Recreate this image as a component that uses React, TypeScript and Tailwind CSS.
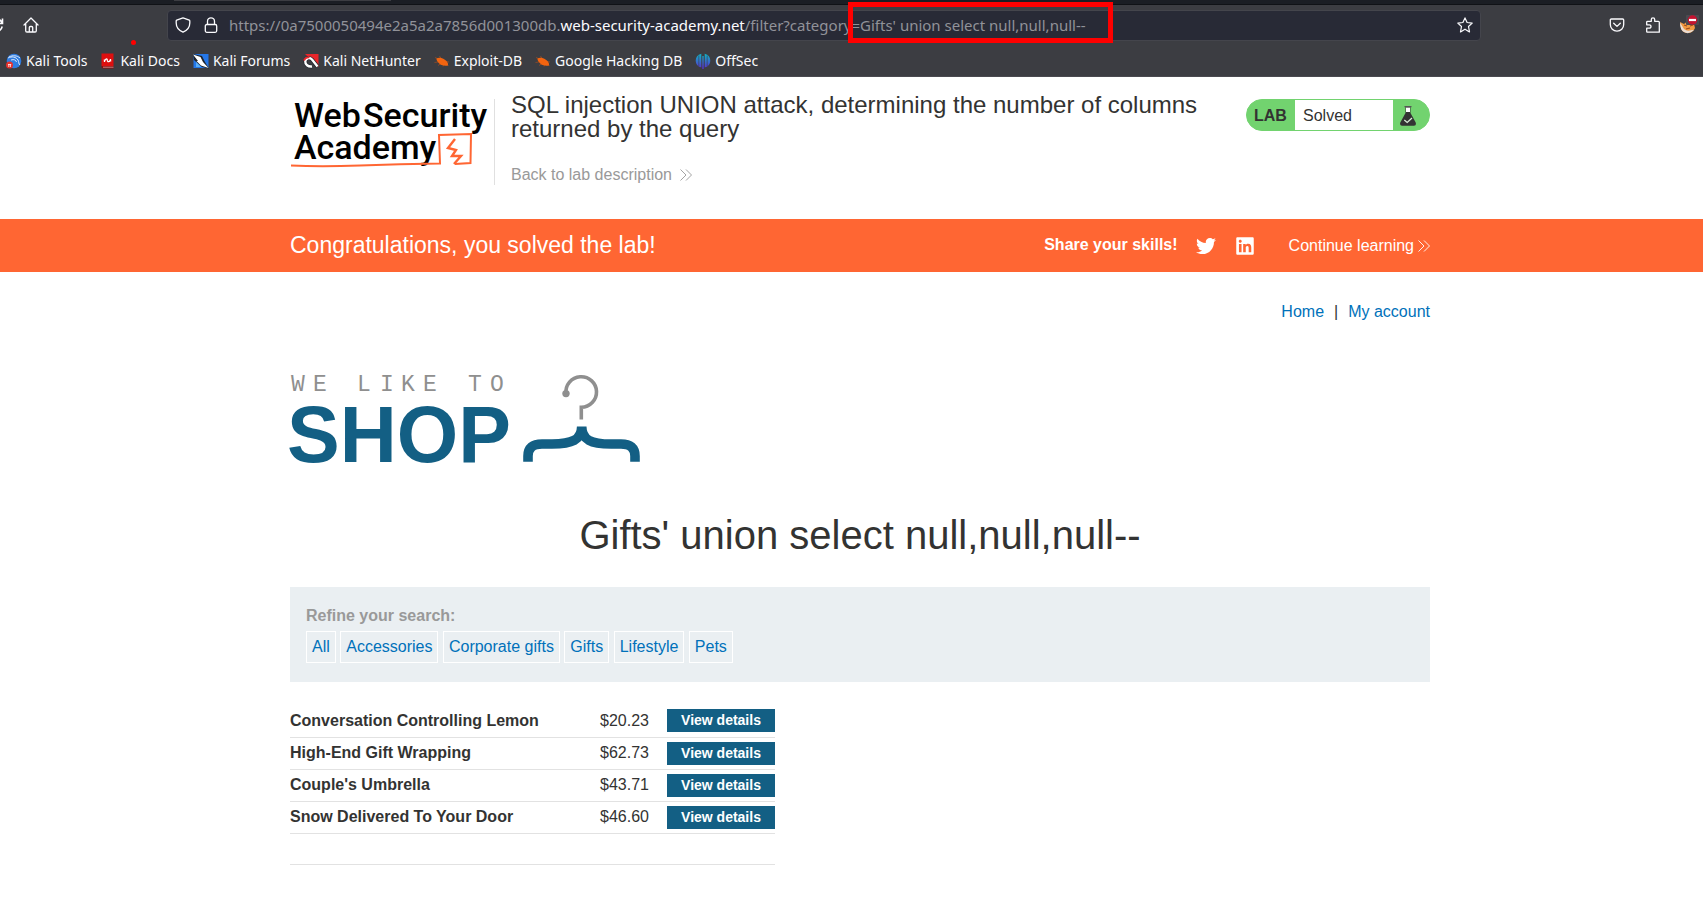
import type { ReactNode } from 'react';
import { FaTwitter, FaLinkedin } from 'react-icons/fa';

function ExploitIcon() {
  return (
    <svg viewBox="0 0 16 16" className="h-4 w-4" aria-hidden="true">
      <path d="M1 4.500L4.500 6M5.500 3L7 5.500M.5 9.500L4 9M4 12.500L7 10.500M9 13.500L10 11M15 9L12 8.500M14.500 12.500L12 11" stroke="#8f4a26" strokeWidth=".9" fill="none" />
      <path d="M2.500 5.500C4.500 4 8 4.500 10.500 6.500C13 8 14.500 10 14 12.500C11.500 13 8 13 5.500 10.800C3.800 9.300 2.300 7.500 2.500 5.500Z" fill="#f26410" />
    </svg>
  );
}

const bookmarks: { label: string; icon: ReactNode }[] = [
  {
    label: 'Kali Tools',
    icon: (
      <svg viewBox="0 0 16 16" className="h-4 w-4" aria-hidden="true">
        <circle cx="8" cy="8" r="7.300" fill="#2f7de1" />
        <path d="M2 5C6 3 10 4 12 7C13 9 12.500 11 14 12M3 4C7 2 11 2.500 14 5M5 7C8 6 10 7 10.500 9" stroke="#dbe8fb" strokeWidth="1" fill="none" />
        <circle cx="3.500" cy="12" r="3.500" fill="#e5322d" />
        <path d="M2 11.500H5.200M2.800 11.500V14M4.400 11.500V14" stroke="#fff" strokeWidth=".8" />
      </svg>
    ),
  },
  {
    label: 'Kali Docs',
    icon: (
      <svg viewBox="0 0 16 16" className="h-4 w-4" aria-hidden="true">
        <path d="M1.500.500H13.500V13H1.500Z" fill="#dd0f0f" />
        <path d="M1.500 13H13.500V15.500H3Q1.500 15.500 1.500 13Z" fill="#8e0d0d" />
        <path d="M3 14.200H13.500" stroke="#d9b9b9" strokeWidth=".7" />
        <path d="M4.500 9L4.300 6.500M4.500 8.500C6 5 7.200 5.500 7.300 7.200C7.400 9.200 9.500 9.500 10.500 6.300M10.700 8.500L10.500 6" fill="none" stroke="#fff" strokeWidth="1.200" />
      </svg>
    ),
  },
  {
    label: 'Kali Forums',
    icon: (
      <svg viewBox="0 0 16 16" className="h-4 w-4" aria-hidden="true">
        <path d="M.5 1H15.500V15H.500Z" fill="#2577e8" />
        <path d="M0 1L9 3L12 9L16 15.500L9 14L1 7Z" fill="#20242b" />
        <path d="M0 1.500L7.500 4L10 9L15.500 15L8 12.500L5 9.500L3.500 8L5 8Z" fill="#fff" />
        <path d="M3 9L8 14H3Z" fill="#58aef5" />
      </svg>
    ),
  },
  {
    label: 'Kali NetHunter',
    icon: (
      <svg viewBox="0 0 16 16" className="h-4 w-4" aria-hidden="true">
        <path d="M2 1H15.500V14Z" fill="#e8262b" />
        <path d="M9 13.500C5 14 2 11.500 2.300 8.200C2.600 5 6.500 4 9 6.500L14.500 13.500" fill="none" stroke="#20242b" strokeWidth="3.800" />
        <path d="M9 13.500C5 14 2 11.500 2.300 8.200C2.600 5 6.500 4 9 6.500L14.500 13.500" fill="none" stroke="#fff" strokeWidth="2.400" />
        <path d="M1 7.500Q2.500 3.500 6.500 4.500" fill="none" stroke="#e8262b" strokeWidth="1.800" />
      </svg>
    ),
  },
  { label: 'Exploit-DB', icon: <ExploitIcon /> },
  { label: 'Google Hacking DB', icon: <ExploitIcon /> },
  {
    label: 'OffSec',
    icon: (
      <svg viewBox="0 0 16 16" className="h-4 w-4" aria-hidden="true">
        <defs>
          <linearGradient id="offsec" x1="0" y1="0" x2="0" y2="1">
            <stop offset="0" stopColor="#0fb5c4" />
            <stop offset="1" stopColor="#5a2bd0" />
          </linearGradient>
        </defs>
        <path d="M6.300.8V14.500Q.7 13 .7 7.700Q.7 2.500 6.300.8ZM9.700.8V14.500Q15.300 13 15.300 7.700Q15.300 2.500 9.700.8ZM7.300 3H8.700V16H7.300Z" fill="url(#offsec)" />
        <path d="M3.800 2.500V13M12.200 2.500V13" stroke="#3a3b45" strokeWidth=".6" />
      </svg>
    ),
  },
];

const iconButton = 'flex h-5 w-5 items-center justify-center text-[#fbfbfe]';

function BrowserChrome() {
  return (
    <header className="relative overflow-hidden border-b border-[#4a4a50] bg-[#3c3d42] font-['Noto_Sans',sans-serif] text-[#fbfbfe]">
      <div className="h-[5px] border-b border-[#101216] bg-[#1b1e24]">
        <div className="ml-[174px] h-px w-[217px] bg-[#3c3d42]" />
      </div>
      <div className="flex h-10 items-center">
        <button type="button" aria-label="Reload" className="-ml-3 flex h-4 w-4 items-center">
          <svg viewBox="0 0 16 16" className="h-4 w-4" fill="none" stroke="currentColor" strokeWidth="1.600">
            <path d="M14.500 1.500V6.500H10M14 6A6.500 6.500 0 1 0 14.200 9.500" />
          </svg>
        </button>
        <button type="button" aria-label="Home" className={`ml-[17px] ${iconButton}`}>
          <svg viewBox="0 0 16 16" className="h-4 w-4" fill="none" stroke="currentColor" strokeWidth="1.300" strokeLinejoin="round" strokeLinecap="round">
            <path d="M1 8L8 1L15 8M2.700 7V13.800Q2.700 15 3.900 15H12.100Q13.300 15 13.300 13.800V7M6.300 15V10.500Q6.300 9.500 7.300 9.500H8.700Q9.700 9.500 9.700 10.500V15" />
          </svg>
        </button>
        <div className="ml-[126px] mr-[126px] flex h-[31px] min-w-0 flex-1 items-center rounded border border-[#44454c] bg-[#282a36] pl-[7px] pr-[7px]">
          <svg viewBox="0 0 16 16" className="h-4 w-4 shrink-0" fill="none" stroke="currentColor" strokeWidth="1.300" strokeLinejoin="round" role="img" aria-label="Tracking protection">
            <path d="M8 .9L14.300 3.200Q14.800 3.400 14.800 4V6Q14.800 12.200 8 15.200Q1.200 12.200 1.200 6V4Q1.200 3.400 1.700 3.200Z" />
          </svg>
          <svg viewBox="0 0 16 16" className="ml-3 h-4 w-4 shrink-0" fill="none" stroke="currentColor" strokeWidth="1.300" role="img" aria-label="Secure connection">
            <rect x="2.300" y="7.500" width="11.400" height="7.800" rx="1.500" />
            <path d="M4.500 7.500V4.300A3.500 3.500 0 0 1 11.500 4.300V7.500" />
          </svg>
          <div
            role="textbox"
            aria-label="Address"
            contentEditable
            suppressContentEditableWarning
            className="ml-[10px] min-w-0 flex-1 overflow-hidden whitespace-nowrap text-[15px] leading-6 text-[#919299] outline-none"
          >
            https://0a7500050494e2a5a2a7856d001300db.<span className="text-[#fbfbfe]">web-security-academy.net</span>/filter?category=Gifts' union select null,null,null--
          </div>
          <button type="button" aria-label="Bookmark this page">
            <svg viewBox="0 0 16 16" className="h-4 w-4" fill="none" stroke="currentColor" strokeWidth="1.200" strokeLinejoin="round">
              <path d="M8 .9L10.100 5.500L15.200 6.100L11.500 9.500L12.500 14.900L8 12.200L3.500 14.900L4.500 9.500L.8 6.100L5.900 5.500Z" />
            </svg>
          </button>
        </div>
        <div className="flex items-center gap-4">
          <button type="button" aria-label="Save to Pocket" className={iconButton}>
            <svg viewBox="0 0 16 16" className="h-4 w-4" fill="none" stroke="currentColor" strokeWidth="1.300" strokeLinejoin="round" strokeLinecap="round">
              <path d="M2.400 2H13.600Q14.700 2 14.700 3.100V7.500A6.700 6.700 0 0 1 1.300 7.500V3.100Q1.300 2 2.400 2ZM4.700 6.200L8 9.400L11.300 6.200" />
            </svg>
          </button>
          <button type="button" aria-label="Extensions" className={iconButton}>
            <svg viewBox="0 0 16 16" className="h-4 w-4" fill="none" stroke="currentColor" strokeWidth="1.300" strokeLinejoin="round">
              <path d="M2.500 4.300H6.300V2.500A1.700 1.700 0 0 1 9.700 2.500V4.300H13.400Q14.300 4.300 14.300 5.200V15.200H2.500Q1.700 15.200 1.700 14.400V11.200H4.300A1.700 1.700 0 0 0 4.300 7.800H1.700V5.100Q1.700 4.300 2.500 4.300Z" />
            </svg>
          </button>
          <button type="button" aria-label="FoxyProxy" className="mr-1 flex h-5 w-5 items-center justify-center">
            <svg viewBox="0 0 20 20" className="h-5 w-5" aria-hidden="true">
              <path d="M1 7L5 9L10 5L15 9L16 13Q14 18 9 18Q3 18 2 13Z" fill="#f09a43" />
              <path d="M1 7.500Q1 15 5 17Q10 20 15 15L13 15Q8 17 5 14Z" fill="#e9dcd3" />
              <path d="M5 10L8 11M11 11L14 10M7 14L11 13" stroke="#9c4a1c" strokeWidth="1.200" />
              <rect x="7" y="0" width="13" height="10" rx="1" fill="#4a4a50" />
              <circle cx="13.500" cy="5" r="4.700" fill="#c4122f" />
              <path d="M10 5H17" stroke="#fff" strokeWidth="2.200" />
            </svg>
          </button>
        </div>
      </div>
      <nav aria-label="Bookmarks" className="flex h-[31px] items-center gap-[13px] pl-[6px] text-[14px] leading-5">
        {bookmarks.map((b) => (
          <a key={b.label} href="#" className="flex items-center gap-1 whitespace-nowrap">
            {b.icon}
            {b.label}
          </a>
        ))}
      </nav>
      <div className="absolute left-[848px] top-[2px] h-[41px] w-[265px] border-[5px] border-[#ff0000]" />
      <div className="absolute left-[131px] top-[40px] h-[5px] w-[5px] rounded-full bg-[#ff0000]" />
    </header>
  );
}

function Chevrons() {
  return (
    <svg viewBox="0 0 12 12" className="h-3 w-3" fill="none" stroke="currentColor" strokeWidth=".9" aria-hidden="true">
      <path d="M.5.500L6 6L.5 11.500M6 .5L11.500 6L6 11.500" />
    </svg>
  );
}

function AcademyLogo() {
  return (
    <svg viewBox="0 0 204 86" className="h-[86px] w-[204px] overflow-visible" role="img" aria-label="Web Security Academy">
      <g fill="#000" className="font-['Roboto',sans-serif] text-[34px] font-medium">
        <text x="4" y="28">Web</text>
        <text x="73" y="28">Security</text>
        <text x="4" y="60">Academy</text>
      </g>
      <g fill="none" stroke="#ff6633" strokeWidth="2">
        <path d="M1 66.500Q30 68 70 66.500T150 64.500L149 36L181 35L180.500 64L165 65" />
        <path d="M165 40L158 49L166 51L162 57L171 57L164 65" strokeWidth="2.400" />
      </g>
    </svg>
  );
}

function LabHeader() {
  return (
    <section className="pl-[17px]">
      <div className="mx-auto flex h-[142px] max-w-[1140px] items-start">
        <div className="mt-[22px] border-r border-[#e0e0e0]">
          <AcademyLogo />
        </div>
        <div className="ml-4 mt-4 w-[700px]">
          <h2 className="text-2xl leading-6">SQL injection UNION attack, determining the number of columns returned by the query</h2>
          <a href="#" className="mt-[22px] inline-flex items-center gap-2 leading-6 text-[#999999]">
            Back to lab description
            <Chevrons />
          </a>
        </div>
        <div className="ml-auto mt-[22px] flex h-8 w-[184px] overflow-hidden rounded-full border border-[#72d36f] bg-[#72d36f]">
          <span className="w-12 pl-[7px] pt-1 font-bold leading-6">LAB</span>
          <p className="flex-1 bg-white pl-2 pt-1 leading-6">Solved</p>
          <span className="w-9 pl-[7px] pt-[6px]">
            <svg viewBox="0 0 16 20" className="h-5 w-4" role="img" aria-label="Solved flask">
              <path d="M5.500 1V7L.3 16.500Q-.6 19.800 2 19.800H14Q16.600 19.800 15.700 16.500L10.500 7V1Z" fill="#333" />
              <path d="M6 1.500H10V6H6Z" fill="#fff" />
              <path d="M4.500.6H11.500" stroke="#555" strokeWidth="1.200" />
              <path d="M4.300 14L7.200 16.500L12 12" fill="none" stroke="#d8ecd8" strokeWidth="1.300" />
            </svg>
          </span>
        </div>
      </div>
    </section>
  );
}

function SolvedBanner() {
  return (
    <section className="bg-[#ff6633] pl-[17px] text-white">
      <div className="mx-auto flex h-[53px] max-w-[1140px] items-center">
        <h4 className="mb-[2px] text-[23px] leading-6">Congratulations, you solved the lab!</h4>
        <span className="mb-[2px] ml-auto font-bold leading-6">Share your skills!</span>
        <a href="#" aria-label="Twitter" className="ml-[18px]">
          <FaTwitter className="h-5 w-5" />
        </a>
        <a href="#" aria-label="LinkedIn" className="ml-[19px]">
          <FaLinkedin className="h-5 w-5" />
        </a>
        <a href="#" className="ml-[34px] flex items-center gap-1 leading-6">
          Continue learning
          <Chevrons />
        </a>
      </div>
    </section>
  );
}

function ShopLogo() {
  return (
    <svg viewBox="10 14 352 90" className="h-[90px] w-[352px] overflow-visible" role="img" aria-label="We like to shop">
      <text x="11 33 55 77 100 121 143 166 188 210" y="31" fill="#8f8f8f" className="font-['Liberation_Mono',monospace] text-[23px]">
        WE LIKE TO
      </text>
      <text x="7" y="101.500" fill="#135f84" className="font-['Liberation_Sans',sans-serif] text-[79px] font-bold">
        SHOP
      </text>
      <circle cx="286" cy="33.600" r="3.700" fill="#8f8f8f" />
      <path d="M286 33.600A15.300 15.300 0 1 1 301.300 47.300V59.500" fill="none" stroke="#8f8f8f" strokeWidth="3.600" />
      <path
        d="M248 101.700V96Q248 84 262 84H272C292 84 301.500 80 301.700 66.500C302 80 311 84 331 84H341Q355 84 355 96V101.700"
        fill="none"
        stroke="#135f84"
        strokeWidth="9.600"
        strokeLinejoin="bevel"
      />
    </svg>
  );
}

const filters = ['All', 'Accessories', 'Corporate gifts', 'Gifts', 'Lifestyle', 'Pets'];

const products = [
  { name: 'Conversation Controlling Lemon', price: '$20.23' },
  { name: 'High-End Gift Wrapping', price: '$62.73' },
  { name: "Couple's Umbrella", price: '$43.71' },
  { name: 'Snow Delivered To Your Door', price: '$46.60' },
];

function Shop() {
  return (
    <main className="pl-[17px]">
      <div className="mx-auto max-w-[1140px]">
        <nav aria-label="Account" className="flex justify-end gap-[10px] pt-7 leading-6">
          <a href="#" className="text-[#0071ba]">Home</a>
          <span>|</span>
          <a href="#" className="text-[#0071ba]">My account</a>
        </nav>
        <div className="mt-[50px]">
          <ShopLogo />
        </div>
        <h1 className="mt-[47px] text-center text-[40px] leading-[48px]">Gifts' union select null,null,null--</h1>
        <section className="mt-7 bg-[#eaeff2] px-4 pb-[19px] pt-[17px]">
          <p className="font-bold leading-6 text-[#999999]">Refine your search:</p>
          <div className="mt-[3px]">
            {filters.map((f) => (
              <span key={f}>
                <a href="#" className="inline-block border border-white px-[5px] leading-[30px] text-[#0071ba]">
                  {f}
                </a>{' '}
              </span>
            ))}
          </div>
        </section>
        <table className="mt-[23px] w-[485px] border-collapse">
          <tbody>
            {products.map((p) => (
              <tr key={p.name} className="h-8 border-b border-[#e2e2e2]">
                <th scope="row" className="p-0 text-left font-bold leading-6">{p.name}</th>
                <td className="w-[67px] p-0 leading-6">{p.price}</td>
                <td className="w-[108px] p-0">
                  <a href="#" className="block bg-[#135f84] text-center text-sm font-bold leading-[23px] text-white">
                    View details
                  </a>
                </td>
              </tr>
            ))}
          </tbody>
        </table>
        <hr className="mt-[30px] w-[485px] border-[#e2e2e2]" />
      </div>
    </main>
  );
}

export default function App() {
  return (
    <div className="min-h-screen bg-white font-['Liberation_Sans',Arial,sans-serif] text-base text-[#333332]">
      <BrowserChrome />
      <LabHeader />
      <SolvedBanner />
      <Shop />
    </div>
  );
}
